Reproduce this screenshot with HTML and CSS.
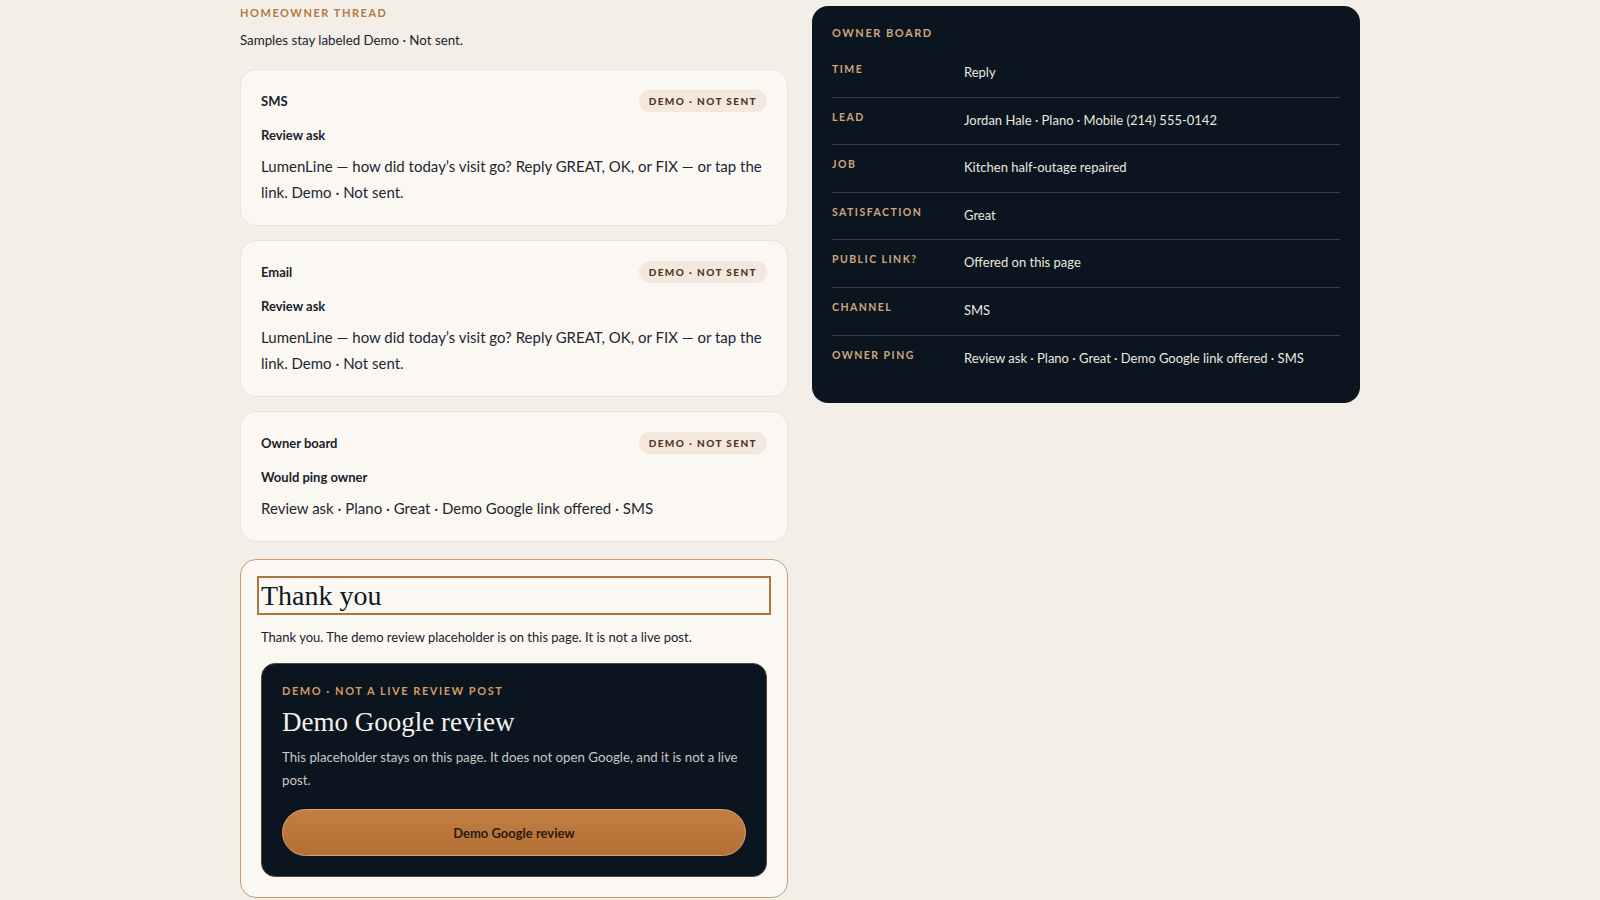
FILE: index.html
```html
<!DOCTYPE html>
<html lang="en">
<head>
<meta charset="utf-8">
<title>Homeowner thread</title>
<link rel="stylesheet" href="styles.css">
</head>
<body>
<main class="page">
  <section class="thread">
    <div class="eyebrow">Homeowner thread</div>
    <p class="sub">Samples stay labeled Demo · Not sent.</p>

    <div class="cards">
      <article class="card">
        <header class="card-head">
          <span class="card-title">SMS</span>
          <span class="badge">Demo · Not sent</span>
        </header>
        <div class="card-kind">Review ask</div>
        <p class="card-body">LumenLine — how did today’s visit go? Reply GREAT, OK, or FIX — or tap the link. Demo · Not sent.</p>
      </article>

      <article class="card">
        <header class="card-head">
          <span class="card-title">Email</span>
          <span class="badge">Demo · Not sent</span>
        </header>
        <div class="card-kind">Review ask</div>
        <p class="card-body">LumenLine — how did today’s visit go? Reply GREAT, OK, or FIX — or tap the link. Demo · Not sent.</p>
      </article>

      <article class="card">
        <header class="card-head">
          <span class="card-title">Owner board</span>
          <span class="badge">Demo · Not sent</span>
        </header>
        <div class="card-kind">Would ping owner</div>
        <p class="card-body">Review ask · Plano · Great · Demo Google link offered · SMS</p>
      </article>
    </div>

    <article class="thanks">
      <h2 class="thanks-title" tabindex="-1">Thank you</h2>
      <p class="thanks-text">Thank you. The demo review placeholder is on this page. It is not a live post.</p>
      <div class="review">
        <div class="review-eyebrow">Demo · Not a live review post</div>
        <h3 class="review-title">Demo Google review</h3>
        <p class="review-text">This placeholder stays on this page. It does not open Google, and it is not a live post.</p>
        <button class="review-btn" type="button">Demo Google review</button>
      </div>
    </article>
  </section>

  <aside class="board">
    <div class="board-eyebrow">Owner board</div>
    <dl class="rows">
      <div class="row"><dt>Time</dt><dd>Reply</dd></div>
      <div class="row"><dt>Lead</dt><dd>Jordan Hale · Plano · Mobile (214) 555-0142</dd></div>
      <div class="row"><dt>Job</dt><dd>Kitchen half-outage repaired</dd></div>
      <div class="row"><dt>Satisfaction</dt><dd>Great</dd></div>
      <div class="row"><dt>Public link?</dt><dd>Offered on this page</dd></div>
      <div class="row"><dt>Channel</dt><dd>SMS</dd></div>
      <div class="row"><dt>Owner ping</dt><dd>Review ask · Plano · Great · Demo Google link offered · SMS</dd></div>
    </dl>
  </aside>
</main>
</body>
</html>
```

FILE: styles.css
```css
* { box-sizing: border-box; }

html, body {
  margin: 0;
  padding: 0;
  background: #f3efe8;
}

body {
  font-family: "Lato", "Liberation Sans", sans-serif;
  color: #1a212b;
}

.page {
  width: 1120px;
  margin: 0 auto;
  padding-top: 6px;
  display: grid;
  grid-template-columns: 548px 548px;
  column-gap: 24px;
  align-items: start;
}

/* Left column */
.eyebrow {
  font-size: 11px;
  line-height: 14px;
  font-weight: 700;
  letter-spacing: 0.14em;
  text-transform: uppercase;
  color: #b8773e;
}

.sub {
  margin: 10px 0 0;
  font-size: 13.3px;
  line-height: 20px;
  color: #1a212b;
}

.cards {
  margin-top: 19px;
  display: flex;
  flex-direction: column;
  gap: 14px;
}

.card {
  background: #fbf8f3;
  border: 1px solid #ebe3d8;
  border-radius: 16px;
  padding: 20px;
}

.card-head {
  display: flex;
  justify-content: space-between;
  align-items: center;
  height: 22px;
}

.card-title {
  font-size: 13px;
  font-weight: 700;
  color: #1a212b;
}

.badge {
  display: inline-flex;
  align-items: center;
  height: 22px;
  padding: 0 10px;
  border-radius: 999px;
  background: #f2e8dd;
  color: #55341f;
  font-size: 10px;
  font-weight: 900;
  letter-spacing: 0.14em;
  text-transform: uppercase;
}

.card-kind {
  margin-top: 13px;
  font-size: 13px;
  line-height: 20px;
  font-weight: 700;
}

.card-body {
  margin: 8px 0 0;
  font-size: 15px;
  line-height: 26px;
  color: #1f2630;
}

/* Thank you card */
.thanks {
  margin-top: 17px;
  background: #fbf8f3;
  border: 1px solid #c89c70;
  border-radius: 16px;
  padding: 20px;
}

.thanks-title {
  margin: 0;
  font-family: "Liberation Serif", "DejaVu Serif", serif;
  font-weight: 400;
  font-size: 28px;
  line-height: 31px;
  color: #111821;
  outline: 2px solid #a97842;
  outline-offset: 2px;
}

.thanks-text {
  margin: 16px 0 0;
  font-size: 13px;
  line-height: 20px;
}

.review {
  margin-top: 16px;
  background: #0a1520;
  border: 1px solid #5b4632;
  border-radius: 14px;
  padding: 20px;
}

.review-eyebrow {
  font-size: 11px;
  line-height: 14px;
  font-weight: 700;
  letter-spacing: 0.14em;
  text-transform: uppercase;
  color: #d39b60;
}

.review-title {
  margin: 9px 0 0;
  font-family: "Liberation Serif", "DejaVu Serif", serif;
  font-weight: 400;
  font-size: 27px;
  line-height: 31px;
  color: #f6f1e9;
}

.review-text {
  margin: 8px 0 0;
  font-size: 13.25px;
  line-height: 23px;
  color: #c9c7c3;
}

.review-btn {
  display: block;
  width: 100%;
  height: 47px;
  margin-top: 17px;
  border: 1px solid #d7a070;
  border-radius: 999px;
  background: linear-gradient(180deg, #c27f41 0%, #b46f35 100%);
  font-family: inherit;
  font-size: 13px;
  font-weight: 700;
  color: #2a1a0f;
  cursor: pointer;
}

/* Right column */
.board {
  background: #0a1520;
  border-radius: 16px;
  padding: 20px 20px 21px;
  color: #ece7df;
}

.board-eyebrow {
  font-size: 11px;
  line-height: 14px;
  font-weight: 700;
  letter-spacing: 0.14em;
  text-transform: uppercase;
  color: #d1a57b;
}

.rows {
  margin: 10px 0 0;
}

.row {
  display: grid;
  grid-template-columns: 120px 1fr;
  column-gap: 12px;
  align-items: start;
  padding: 13px 0 14px;
  border-bottom: 1px solid rgba(230, 215, 195, 0.22);
}

.row:last-child {
  border-bottom: 0;
}

.row dt {
  font-size: 10.5px;
  line-height: 12px;
  font-weight: 700;
  letter-spacing: 0.14em;
  text-transform: uppercase;
  color: #d1a57b;
}

.row dd {
  margin: 0;
  font-size: 13px;
  line-height: 19.6px;
  color: #ece7df;
}
```
